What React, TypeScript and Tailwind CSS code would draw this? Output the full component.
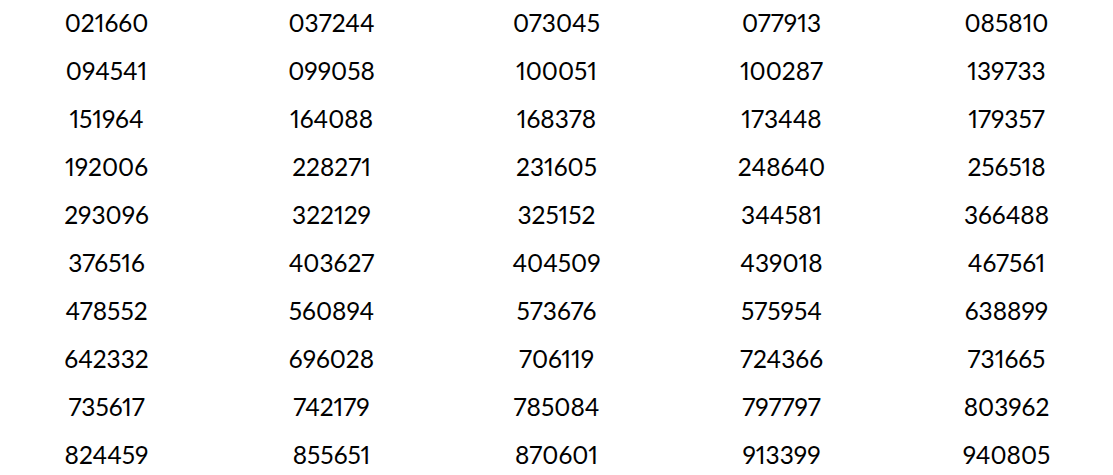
import React from "react";

const codes = [
  "021660", "037244", "073045", "077913", "085810",
  "094541", "099058", "100051", "100287", "139733",
  "151964", "164088", "168378", "173448", "179357",
  "192006", "228271", "231605", "248640", "256518",
  "293096", "322129", "325152", "344581", "366488",
  "376516", "403627", "404509", "439018", "467561",
  "478552", "560894", "573676", "575954", "638899",
  "642332", "696028", "706119", "724366", "731665",
  "735617", "742179", "785084", "797797", "803962",
  "824459", "855651", "870601", "913399", "940805",
];

export default function App() {
  return (
    <div className="min-h-screen bg-white font-['Lato',sans-serif] text-black">
      <div className="-mt-[1px] grid grid-cols-5 gap-x-[12px]">
        {codes.map((code) => (
          <div key={code} className="flex h-12 items-center justify-center text-[24.5px] leading-none proportional-nums">
            {code}
          </div>
        ))}
      </div>
    </div>
  );
}
